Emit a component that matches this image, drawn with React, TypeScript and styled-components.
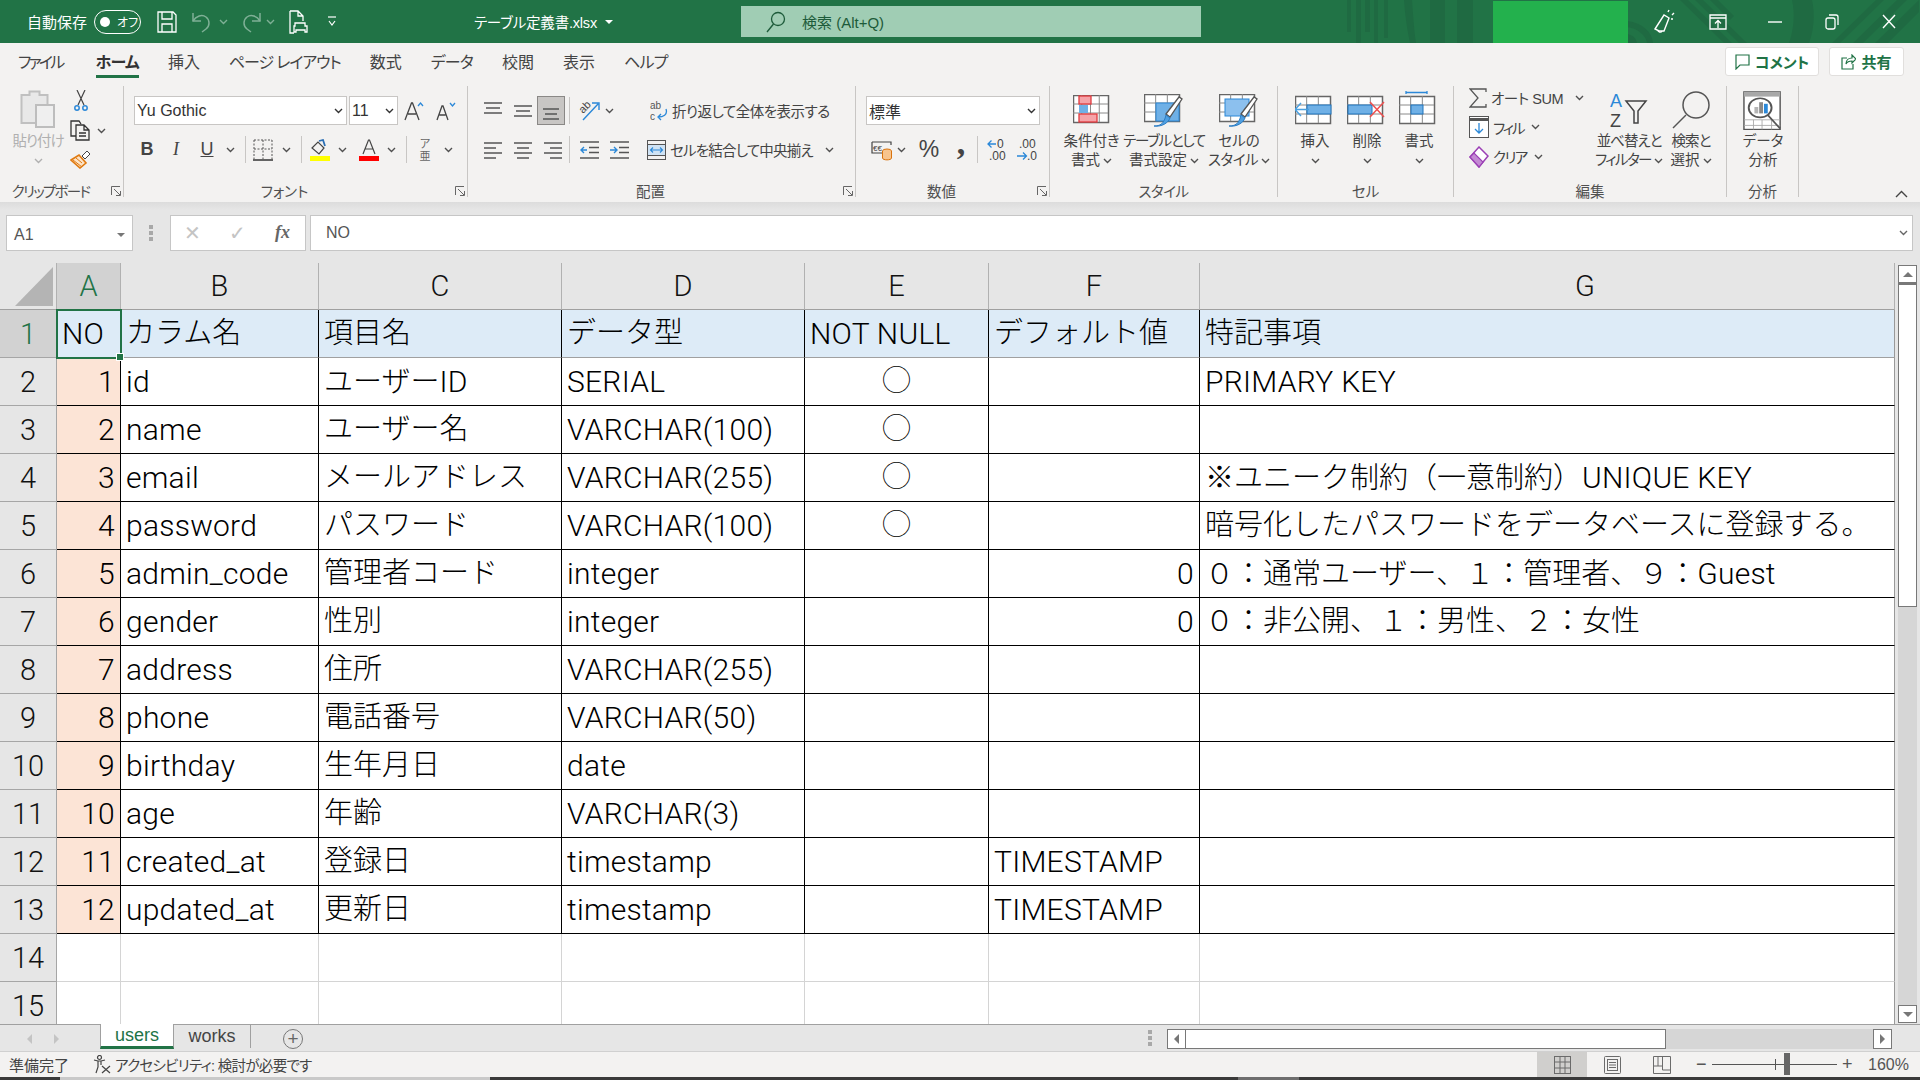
import React from 'react';
import styled, { createGlobalStyle } from 'styled-components';

const GREEN = '#217346';
const FONT = `"Liberation Sans", "Noto Sans CJK JP", sans-serif`;
const SHEET_FONT = `Roboto, "Noto Sans CJK JP", sans-serif`;

const GlobalStyle = createGlobalStyle`
  html, body { margin: 0; padding: 0; background: #fff; }
  body { font-family: ${FONT}; font-feature-settings: "palt"; overflow: hidden; }
  * { box-sizing: border-box; }
`;

/* ---------- data ---------- */
const COLUMNS = [
  { name: 'A', width: 64 },
  { name: 'B', width: 198 },
  { name: 'C', width: 243 },
  { name: 'D', width: 243 },
  { name: 'E', width: 184 },
  { name: 'F', width: 211 },
  { name: 'G', width: 695 },
];

const ROWS: (string | number)[][] = [
  ['NO', 'カラム名', '項目名', 'データ型', 'NOT NULL', 'デフォルト値', '特記事項'],
  [1, 'id', 'ユーザーID', 'SERIAL', '◯', '', 'PRIMARY KEY'],
  [2, 'name', 'ユーザー名', 'VARCHAR(100)', '◯', '', ''],
  [3, 'email', 'メールアドレス', 'VARCHAR(255)', '◯', '', '※ユニーク制約（一意制約）UNIQUE KEY'],
  [4, 'password', 'パスワード', 'VARCHAR(100)', '◯', '', '暗号化したパスワードをデータベースに登録する。'],
  [5, 'admin_code', '管理者コード', 'integer', '', 0, '０：通常ユーザー、１：管理者、９：Guest'],
  [6, 'gender', '性別', 'integer', '', 0, '０：非公開、１：男性、２：女性'],
  [7, 'address', '住所', 'VARCHAR(255)', '', '', ''],
  [8, 'phone', '電話番号', 'VARCHAR(50)', '', '', ''],
  [9, 'birthday', '生年月日', 'date', '', '', ''],
  [10, 'age', '年齢', 'VARCHAR(3)', '', '', ''],
  [11, 'created_at', '登録日', 'timestamp', '', 'TIMESTAMP', ''],
  [12, 'updated_at', '更新日', 'timestamp', '', 'TIMESTAMP', ''],
  ['', '', '', '', '', '', ''],
  ['', '', '', '', '', '', ''],
];

const TABS = [
  { text: 'ファイル', ls: -2.7, mr: 4 },
  { text: 'ホーム', ls: -0.8, mr: 0 },
  { text: '挿入', ls: 0, mr: 0 },
  { text: 'ページ レイアウト', ls: -1.1, mr: 0 },
  { text: '数式', ls: 0, mr: 0 },
  { text: 'データ', ls: -0.8, mr: 0 },
  { text: '校閲', ls: 0, mr: 0 },
  { text: '表示', ls: 0, mr: 0 },
  { text: 'ヘルプ', ls: -0.8, mr: 0 },
];

/* ---------- icons ---------- */
const Chev = ({ color = '#505050' }: { color?: string }) => (
  <svg width="9" height="6" viewBox="0 0 9 6">
    <polyline points="1,1 4.5,4.5 8,1" fill="none" stroke={color} strokeWidth="1.4" />
  </svg>
);

const Launcher = () => (
  <svg width="10" height="10" viewBox="0 0 10 10" fill="none" stroke="#666">
    <polyline points="0.5,9 0.5,0.5 9,0.5" />
    <polyline points="3,3 9,9" />
    <polyline points="5,9.5 9.5,9.5 9.5,5" />
  </svg>
);

const SaveIcon = () => (
  <svg width="20" height="22" viewBox="0 0 20 22" fill="none" stroke="#fff" strokeWidth="1.3">
    <path d="M1 1h15l3 3v17H1z" />
    <path d="M5 1v7h10V1M5 21v-8h10v8" />
  </svg>
);

const UndoIcon = ({ flip }: { flip?: boolean }) => (
  <svg width="20" height="22" viewBox="0 0 20 22" fill="none" stroke="#7fb096" strokeWidth="1.5" style={flip ? { transform: 'scaleX(-1)' } : undefined}>
    <path d="M1 2v8h8" />
    <path d="M1 10c3-5 9-7 13-4 4 3 4 9 0 12l-4 3" />
  </svg>
);

const PrintIcon = () => (
  <svg width="19" height="24" viewBox="0 0 19 24" fill="none" stroke="#fff" strokeWidth="1.3">
    <path d="M1 1h8l5 5v5M9 1v5h5M1 1v22h4" />
    <path d="M6 13h10v3h2v6h-2v-2H7v2H5v-6h1z" />
  </svg>
);

const CustomizeIcon = () => (
  <svg width="10" height="11" viewBox="0 0 10 11" fill="none" stroke="#fff">
    <path d="M1 1h8" strokeWidth="1.2" />
    <polyline points="2,5 5,9 8,5" strokeWidth="1.2" />
  </svg>
);

const SearchIcon = () => (
  <svg width="20" height="22" viewBox="0 0 20 22" fill="none" stroke="#1d5b3a" strokeWidth="1.3">
    <circle cx="12" cy="8" r="6.5" />
    <path d="M7.5 13 1 21" />
  </svg>
);

const MegaphoneIcon = () => (
  <svg width="22" height="26" viewBox="0 0 22 26" fill="none" stroke="#fff" strokeWidth="1.4">
    <path d="M2 20 11 6l5 3-5 13H6z" />
    <path d="M5 21c0 2 3 3 4 1" />
    <path d="M15 3l1-2M19 6l2-2M18 10h2" />
  </svg>
);

const RibbonModeIcon = () => (
  <svg width="18" height="16" viewBox="0 0 18 16" fill="none" stroke="#fff" strokeWidth="1.3">
    <path d="M1 1h16v14H1zM1 4h16" />
    <path d="M9 14V7M6 9.5 9 6.5l3 3" />
  </svg>
);

const MinIcon = () => (
  <svg width="14" height="2" viewBox="0 0 14 2">
    <path d="M0 1h14" stroke="#fff" strokeWidth="1.4" />
  </svg>
);

const RestoreIcon = () => (
  <svg width="14" height="16" viewBox="0 0 14 16" fill="none" stroke="#fff" strokeWidth="1.3">
    <rect x="1" y="4" width="9" height="11" rx="2" />
    <path d="M4 1h7c1.5 0 2 1 2 2v8" />
  </svg>
);

const CloseIcon = () => (
  <svg width="14" height="15" viewBox="0 0 14 15" stroke="#fff" strokeWidth="1.4">
    <path d="M1 1l12 13M13 1 1 14" />
  </svg>
);

const PasteIcon = () => (
  <svg width="36" height="38" viewBox="0 0 36 38">
    <path d="M1.5 5h8V1.5h10V5h8v28h-26z" fill="#e8e8e8" stroke="#c0c0c0" strokeWidth="2" />
    <rect x="16" y="15" width="18" height="22" fill="#efefef" stroke="#bdbdbd" strokeWidth="2" />
  </svg>
);

const CutIcon = () => (
  <svg width="14" height="21" viewBox="0 0 14 21" fill="none">
    <path d="M3 0l7 15M11 0 4 15" stroke="#444" strokeWidth="1.2" />
    <circle cx="3" cy="18" r="2.2" stroke="#2b88d8" strokeWidth="1.5" />
    <circle cx="11" cy="18" r="2.2" stroke="#2b88d8" strokeWidth="1.5" />
  </svg>
);

const CopyIcon = () => (
  <svg width="20" height="21" viewBox="0 0 20 21" fill="none" stroke="#333" strokeWidth="1.3">
    <path d="M6 16H1V1h8l2 3" />
    <path d="M6 5h8l5 5v10H6zM14 5v5h5M9 13h7M9 16h7" />
  </svg>
);

const PainterIcon = () => (
  <svg width="21" height="19" viewBox="0 0 21 19" fill="none">
    <path d="M1 10 9 5l7 8-6 5z" fill="#fde3c6" stroke="#e07a10" strokeWidth="1.6" />
    <path d="M3 10l9 7M6 8l6 5" stroke="#e07a10" />
    <path d="M12 6l5-5 3 3-5 5z" fill="#fff" stroke="#444" />
  </svg>
);

const GrowIcon = ({ up }: { up?: boolean }) => (
  <svg width="20" height="20" viewBox="0 0 20 20" fill="none">
    <path d={up ? 'M1 19 7.5 2h1L15 19M4 13h8' : 'M1 19 6 5h1l5 14M3.5 14h6'} stroke="#444" strokeWidth="1.3" />
    <polyline points={up ? '14,5 16.5,2 19,5' : '14,2 16.5,5 19,2'} stroke="#2b88d8" strokeWidth="1.3" />
  </svg>
);

const BorderIcon = () => (
  <svg width="20" height="22" viewBox="0 0 20 22" fill="none" stroke="#555">
    <path d="M1 1v19M19 1v19M1 1h18M10 1v19M1 10h18" strokeDasharray="2 1.5" />
    <path d="M0 21h20" strokeWidth="1.5" stroke="#333" />
  </svg>
);

const FillIcon = () => (
  <svg width="20" height="22" viewBox="0 0 20 22" fill="none">
    <path d="M2 9 8 3l6 6-5 6z" stroke="#444" strokeWidth="1.2" />
    <path d="M9 2l4-1 2 6" stroke="#2b6fb5" strokeWidth="1.8" />
    <rect x="0" y="17" width="20" height="5" fill="#ffff00" />
  </svg>
);

const FontColorIcon = () => (
  <svg width="20" height="22" viewBox="0 0 20 22" fill="none">
    <path d="M4 15 9.5 1h1L16 15M6 10h8" stroke="#444" strokeWidth="1.2" />
    <rect x="0" y="17" width="20" height="5" fill="#ff0000" />
  </svg>
);

const Lines = ({ rows, width = 18 }: { rows: [number, number, number][]; width?: number }) => (
  <svg width={width} height="20" viewBox={`0 0 ${width} 20`} stroke="#555" strokeWidth="1.5">
    {rows.map(([x1, x2, y], i) => (
      <path key={i} d={`M${x1} ${y}H${x2}`} />
    ))}
  </svg>
);

const OrientIcon = () => (
  <svg width="21" height="22" viewBox="0 0 21 22" fill="none">
    <text x="1" y="11" fontSize="11" fill="#444" transform="rotate(-45 6 9)" fontFamily="Liberation Sans">ab</text>
    <path d="M4 20 19 4M13 3h7v7" stroke="#2b88d8" strokeWidth="1.4" />
  </svg>
);

const IndentIcon = ({ rtl }: { rtl?: boolean }) => (
  <svg width="19" height="20" viewBox="0 0 19 20" fill="none">
    <path d="M0 2h19M9 7.5h10M9 12.5h10M0 18h19" stroke="#555" strokeWidth="1.4" />
    {rtl ? (
      <path d="M0 10h6M4 7l3 3-3 3" stroke="#2b88d8" strokeWidth="1.4" />
    ) : (
      <path d="M7 10H1M4 7l-3 3 3 3" stroke="#2b88d8" strokeWidth="1.4" />
    )}
  </svg>
);

const WrapIcon = () => (
  <svg width="18" height="22" viewBox="0 0 18 22" fill="none">
    <text x="0" y="9" fontSize="10" fill="#555" fontFamily="Liberation Sans">ab</text>
    <text x="0" y="20" fontSize="10" fill="#555" fontFamily="Liberation Sans">c</text>
    <path d="M16 9c2 6-3 8-8 8M11 14l-3 3 3 3" stroke="#2b88d8" strokeWidth="1.3" />
  </svg>
);

const MergeIcon = () => (
  <svg width="19" height="20" viewBox="0 0 19 20" fill="none">
    <rect x="0.5" y="0.5" width="18" height="19" stroke="#555" />
    <rect x="0.5" y="4.5" width="18" height="11" fill="#cfe3f5" stroke="#555" />
    <path d="M4 10h11M6 7.5 3.5 10 6 12.5M13 7.5l2.5 2.5L13 12.5" stroke="#2b88d8" strokeWidth="1.1" />
  </svg>
);

const AccountIcon = () => (
  <svg width="21" height="22" viewBox="0 0 21 22" fill="none">
    <path d="M1 3h19v3M1 3v11h10" stroke="#444" strokeWidth="1.2" />
    <text x="2" y="12" fontSize="8" fill="#444" fontFamily="Liberation Sans">€€</text>
    <ellipse cx="16" cy="12" rx="4.5" ry="2" fill="#f7c48d" stroke="#d9730d" />
    <path d="M11.5 12v7c0 2.5 9 2.5 9 0v-7" fill="#f7c48d" stroke="#d9730d" />
  </svg>
);

const DecimalIcon = ({ more }: { more?: boolean }) => (
  <svg width="20" height="24" viewBox="0 0 20 24" fill="none">
    <text x={more ? 2 : 10} y="10" fontSize="12" fill="#444" fontFamily="Liberation Sans">{more ? '.00' : '0'}</text>
    <text x={more ? 10 : 2} y="22" fontSize="12" fill="#444" fontFamily="Liberation Sans">{more ? '.0' : '.00'}</text>
    {more ? (
      <path d="M0 18h9M6 14.5 9.5 18 6 21.5" stroke="#2b88d8" strokeWidth="1.3" />
    ) : (
      <path d="M9 6H1M4.5 2.5 1 6l3.5 3.5" stroke="#2b88d8" strokeWidth="1.3" />
    )}
  </svg>
);

const SheetGlyph = ({ x = 0, y = 0, w = 35, h = 27, cols = 4, rows = 3 }) => (
  <g fill="none">
    <rect x={x + 0.5} y={y + 0.5} width={w} height={h} stroke="#666" strokeWidth="1.5" fill="#fff" />
    {Array.from({ length: cols - 1 }, (_, i) => (
      <path key={i} d={`M${x + ((i + 1) * w) / cols} ${y}v${h}`} stroke="#8a8a8a" />
    ))}
    {Array.from({ length: rows - 1 }, (_, i) => (
      <path key={`r${i}`} d={`M${x} ${y + ((i + 1) * h) / rows}h${w}`} stroke="#8a8a8a" />
    ))}
  </g>
);

const CondIcon = () => (
  <svg width="37" height="32" viewBox="0 0 37 32">
    <SheetGlyph />
    <rect x="6" y="1" width="12" height="8" fill="#f5a3a8" stroke="#e03a3e" strokeWidth="1.3" />
    <rect x="6" y="10" width="9" height="8" fill="#6fb0e6" />
    <rect x="6" y="19" width="18" height="8" fill="#f5a3a8" stroke="#e03a3e" strokeWidth="1.3" />
  </svg>
);

const Brush = () => (
  <g>
    <path d="M22 20 35 3l3 2-12 18z" fill="#fff" stroke="#555" strokeWidth="1.3" />
    <path d="M10 32c6 0 10-2 12-11l4 3c-2 5-8 9-16 8z" fill="#4f9fe0" stroke="#2b7cc4" />
  </g>
);

const TableStyleIcon = () => (
  <svg width="40" height="33" viewBox="0 0 40 33">
    <SheetGlyph cols={3} />
    <rect x="12" y="9" width="23" height="18" fill="#6fb0e6" stroke="#2b88d8" />
    <Brush />
  </svg>
);

const CellStyleIcon = () => (
  <svg width="40" height="33" viewBox="0 0 40 33">
    <SheetGlyph cols={3} />
    <rect x="6" y="5" width="24" height="17" fill="#8cc0ee" stroke="#2b88d8" />
    <Brush />
  </svg>
);

const CellOpIcon = ({ kind }: { kind: 'insert' | 'delete' | 'format' }) => (
  <svg width="40" height="40" viewBox="0 0 40 40">
    {kind === 'format' && <path d="M7 1.5h21M7 0v3M28 0v3" stroke="#2b88d8" strokeWidth="1.3" />}
    <SheetGlyph y={5} cols={3} />
    {kind === 'insert' && (
      <g>
        <rect x="12" y="14" width="24" height="9" fill="#6fb0e6" stroke="#1f74bd" />
        <path d="M0 18.5h14M6 12l-6 6.5L6 25" fill="none" stroke="#4aa0e0" strokeWidth="1.5" />
      </g>
    )}
    {kind === 'delete' && (
      <g>
        <rect x="1" y="14" width="24" height="9" fill="#6fb0e6" stroke="#1f74bd" />
        <path d="M23 11l14 15M37 11 23 26" stroke="#f0504f" strokeWidth="1.5" />
      </g>
    )}
    {kind === 'format' && <rect x="12" y="14" width="12" height="9" fill="#6fb0e6" stroke="#1f74bd" />}
  </svg>
);

const SigmaIcon = () => (
  <svg width="18" height="20" viewBox="0 0 18 20" fill="none">
    <path d="M17 4V1H1l8 9-8 9h16v-3" stroke="#555" strokeWidth="1.3" />
  </svg>
);

const FillDownIcon = () => (
  <svg width="20" height="22" viewBox="0 0 20 22" fill="none">
    <rect x="0.5" y="0.5" width="19" height="21" fill="#fff" stroke="#555" />
    <path d="M0 3.5h20" stroke="#555" strokeWidth="3" />
    <path d="M10 7v10M6 13l4 4 4-4" stroke="#2b88d8" strokeWidth="1.3" />
  </svg>
);

const ClearIcon = () => (
  <svg width="20" height="22" viewBox="0 0 20 22" fill="none">
    <path d="M10 1l9 9-9 11-9-10z" fill="#fff" stroke="#9b3fb5" strokeWidth="1.5" />
    <path d="M1 11l4-4 9 9-4 5z" fill="#c38ad3" stroke="#9b3fb5" strokeWidth="1.2" />
  </svg>
);

const SortIcon = () => (
  <svg width="38" height="40" viewBox="0 0 38 40" fill="none">
    <text x="0" y="16" fontSize="18" fill="#2b88d8" fontFamily="Liberation Sans">A</text>
    <text x="0" y="36" fontSize="18" fill="#444" fontFamily="Liberation Sans">Z</text>
    <path d="M16 10h20l-8 10v12h-4V20z" stroke="#444" strokeWidth="1.5" />
  </svg>
);

const FindIcon = () => (
  <svg width="38" height="40" viewBox="0 0 38 40" fill="none" stroke="#555" strokeWidth="1.5">
    <ellipse cx="24" cy="14" rx="13" ry="13" />
    <path d="M14 24 1 37" />
  </svg>
);

const AnalyzeIcon = () => (
  <svg width="40" height="40" viewBox="0 0 42 50" preserveAspectRatio="none" fill="none">
    <rect x="1" y="1" width="38" height="47" fill="#fff" stroke="#555" strokeWidth="1.5" />
    <rect x="1" y="1" width="38" height="6" fill="#a8a8a8" />
    <path d="M1 36h38M1 43h38M11 36v12M20 36v12M30 36v12" stroke="#a8a8a8" />
    <circle cx="18" cy="21" r="12" fill="#fff" stroke="#555" strokeWidth="2" />
    <rect x="12" y="20" width="4" height="8" fill="#b5b5b5" />
    <rect x="17" y="14" width="4" height="14" fill="#888" />
    <rect x="22" y="16" width="4" height="12" fill="#2b88d8" />
    <path d="M26 30l13 17" stroke="#555" strokeWidth="2" />
  </svg>
);

const CommentIcon = () => (
  <svg width="15" height="16" viewBox="0 0 15 16" fill="none" stroke={GREEN} strokeWidth="1.2">
    <path d="M1 1h13v10H5l-4 4z" />
  </svg>
);

const ShareIcon = () => (
  <svg width="15" height="16" viewBox="0 0 15 16" fill="none" stroke={GREEN} strokeWidth="1.2">
    <path d="M6 4H1v11h11v-5M5 10c0-4 3-6 6-6V1l4 4-4 4V7c-3 0-5 1-6 3z" />
  </svg>
);

const AccessIcon = () => (
  <svg width="18" height="19" viewBox="0 0 18 19" fill="none" stroke="#444" strokeWidth="1.2">
    <circle cx="6.5" cy="2.5" r="2" />
    <path d="M1 5l4 1h3l4-1M5 6v6l-2 6M8 6v4" />
    <path d="M9 11l8 7M17 11l-8 7" />
  </svg>
);

const ViewNormal = () => (
  <svg width="17" height="18" viewBox="0 0 17 18" stroke="#6b6b6b" fill="none">
    <rect x="0.5" y="0.5" width="16" height="17" />
    <path d="M6 0v18M11 0v18M0 6h17M0 12h17" />
  </svg>
);

const ViewPage = () => (
  <svg width="17" height="18" viewBox="0 0 17 18" stroke="#6b6b6b" fill="none">
    <rect x="0.5" y="0.5" width="16" height="17" rx="1" />
    <rect x="3.5" y="3.5" width="10" height="11" />
    <path d="M5 6.5h7M5 9h7M5 11.5h7" />
  </svg>
);

const ViewBreak = () => (
  <svg width="18" height="18" viewBox="0 0 18 18" stroke="#6b6b6b" fill="none">
    <path d="M0.5 0.5h17v17H0.5zM0.5 10h9V0.5M9.5 10V14h8M5 1v9" />
  </svg>
);

const FxGlyph = () => (
  <svg width="18" height="20" viewBox="0 0 18 20" fill="none">
    <text x="1" y="15" fontSize="18" fontStyle="italic" fontWeight="700" fontFamily="Liberation Serif" fill="#666">fx</text>
  </svg>
);

const TitleDecor = () => (
  <DecorSvg width="720" height="43" viewBox="1200 0 720 43">
    <g fill="#1f6a42">
      <rect x="1347" y="0" width="4" height="32" />
      <rect x="1356" y="0" width="5" height="43" />
      <rect x="1365" y="0" width="5" height="32" />
      <rect x="1374" y="0" width="4" height="43" />
      <rect x="1384" y="0" width="4" height="38" />
      <path d="M1404 0h8c1 14 2 30 4 43h-6c-3-14-5-28-6-43z" />
      <rect x="1430" y="0" width="15" height="43" />
      <rect x="1457" y="0" width="16" height="43" />
      <path d="M1627 21c16 2 25 11 26 22h-6c-1-8-10-15-20-16zM1627 34c6 1 9 4 10 9h-10z" />
      <path d="M1680 0l44 43h8l-44-43zM1695 0l44 43h8l-44-43zM1710 0l20 20 4-4-16-16z" />
      <path d="M1792 0h20c3 14 2 30-3 43h-20c5-14 6-30 3-43z" />
      <path d="M1853 43l44-43h10l-44 43zM1875 43l44-43v12l-31 31zM1832 43l44-43h8l-44 43z" />
    </g>
  </DecorSvg>
);

// Yu Gothic's latin runs a bit larger than the kana next to it
const cellText = (v: string | number) =>
  String(v)
    .split(/([\x20-\x7e]+)/)
    .map((part, i) => (i % 2 ? <LatinRun key={i}>{part}</LatinRun> : part));

/* ---------- app ---------- */
const App: React.FC = () => {
  return (
    <Page>
      <GlobalStyle />

      <TitleBar>
        <TitleDecor />
        <AutoSave>自動保存</AutoSave>
        <Toggle>
          <ToggleKnob />
          <span>オフ</span>
        </Toggle>
        <Slot $w={20} $ml={16}><SaveIcon /></Slot>
        <Slot $w={20} $ml={15}><UndoIcon /></Slot>
        <Slot $w={10} $ml={6}><Chev color="#7fb096" /></Slot>
        <Slot $w={20} $ml={13}><UndoIcon flip /></Slot>
        <Slot $w={10} $ml={4}><Chev color="#7fb096" /></Slot>
        <Slot $w={19} $ml={14}><PrintIcon /></Slot>
        <Slot $w={10} $ml={19}><CustomizeIcon /></Slot>
        <FileName>テーブル定義書.xlsx</FileName>
        <FileCaret />
        <SearchBox>
          <SearchIcon />
          <span>検索 (Alt+Q)</span>
        </SearchBox>
        <UserBlock />
        <Slot $w={22} $ml={25}><MegaphoneIcon /></Slot>
        <Slot $w={18} $ml={34}><RibbonModeIcon /></Slot>
        <Slot $w={14} $ml={41}><MinIcon /></Slot>
        <Slot $w={14} $ml={43}><RestoreIcon /></Slot>
        <Slot $w={14} $ml={43}><CloseIcon /></Slot>
      </TitleBar>

      <TabRow>
        {TABS.map(t => (
          <Tab key={t.text} $active={t.text === 'ホーム'} $ls={t.ls} $mr={t.mr}>{t.text}</Tab>
        ))}
        <TabActions>
          <PillButton $w={94}><CommentIcon />コメント</PillButton>
          <PillButton $w={75}><ShareIcon />共有</PillButton>
        </TabActions>
      </TabRow>

      <Ribbon>
        <Group $w={124}>
          <GroupBody $pl={10}>
            <PasteCol>
              <PasteIcon />
              <BigText $muted $ls={-1}>貼り付け</BigText>
              <ChevLine><Chev color="#b0b0b0" /></ChevLine>
            </PasteCol>
            <ClipCol>
              <CutIcon />
              <CopyRow><CopyIcon /><Chev /></CopyRow>
              <PainterIcon />
            </ClipCol>
          </GroupBody>
          <GroupLabel $launcher $ls={-1.7}>クリップボード<LauncherSpot><Launcher /></LauncherSpot></GroupLabel>
        </Group>

        <Group $w={344}>
          <ToolRows $pl={10}>
            <ToolRow>
              <SelectBox $w={213}>Yu Gothic<Chev color="#333" /></SelectBox>
              <SelectBox $w={49} $ml={2}>11<Chev color="#333" /></SelectBox>
              <Tool $w={22} $ml={5}><GrowIcon up /></Tool>
              <Tool $w={22} $ml={10}><GrowIcon /></Tool>
            </ToolRow>
            <ToolRow>
              <Tool $w={22} $ml={2}><BoldGlyph>B</BoldGlyph></Tool>
              <Tool $w={22} $ml={7}><ItalicGlyph>I</ItalicGlyph></Tool>
              <Tool $w={22} $ml={9}><UnderGlyph>U</UnderGlyph></Tool>
              <Tool $w={12} $ml={6}><Chev /></Tool>
              <VSep $ml={9} />
              <Tool $w={22} $ml={6}><BorderIcon /></Tool>
              <Tool $w={12} $ml={6}><Chev /></Tool>
              <VSep $ml={9} />
              <Tool $w={22} $ml={7}><FillIcon /></Tool>
              <Tool $w={12} $ml={5}><Chev /></Tool>
              <Tool $w={22} $ml={10}><FontColorIcon /></Tool>
              <Tool $w={12} $ml={5}><Chev /></Tool>
              <VSep $ml={9} />
              <Tool $w={14} $ml={11}><Furigana>ア<br />亜</Furigana></Tool>
              <Tool $w={12} $ml={10}><Chev /></Tool>
            </ToolRow>
          </ToolRows>
          <GroupLabel $launcher>フォント<LauncherSpot><Launcher /></LauncherSpot></GroupLabel>
        </Group>

        <Group $w={388}>
          <ToolRows $pl={13}>
            <ToolRow>
              <Tool $w={24} $ml={0}><Lines rows={[[0, 18, 2], [2, 16, 7], [0, 18, 12]]} /></Tool>
              <Tool $w={24} $ml={6}><Lines rows={[[0, 18, 5], [2, 16, 10], [0, 18, 15]]} /></Tool>
              <ActiveTool><Lines rows={[[1, 17, 8], [3, 15, 13], [1, 17, 18]]} /></ActiveTool>
              <VSep $ml={4} />
              <Tool $w={22} $ml={8}><OrientIcon /></Tool>
              <Tool $w={12} $ml={3}><Chev /></Tool>
              <Tool $w={20} $ml={34}><WrapIcon /></Tool>
              <ToolText $ml={3} $ls={-0.5}>折り返して全体を表示する</ToolText>
            </ToolRow>
            <ToolRow>
              <Tool $w={24} $ml={0}><Lines rows={[[0, 18, 3], [0, 12, 8], [0, 18, 13], [0, 12, 18]]} /></Tool>
              <Tool $w={24} $ml={6}><Lines rows={[[0, 18, 3], [3, 15, 8], [0, 18, 13], [3, 15, 18]]} /></Tool>
              <Tool $w={24} $ml={6}><Lines rows={[[0, 18, 3], [6, 18, 8], [0, 18, 13], [6, 18, 18]]} /></Tool>
              <VSep $ml={4} />
              <Tool $w={22} $ml={8}><IndentIcon /></Tool>
              <Tool $w={22} $ml={8}><IndentIcon rtl /></Tool>
              <Tool $w={20} $ml={16}><MergeIcon /></Tool>
              <ToolText $ml={4} $ls={-0.8}>セルを結合して中央揃え</ToolText>
              <Tool $w={12} $ml={11}><Chev /></Tool>
            </ToolRow>
          </ToolRows>
          <GroupLabel $launcher>配置<LauncherSpot><Launcher /></LauncherSpot></GroupLabel>
        </Group>

        <Group $w={194}>
          <ToolRows $pl={10}>
            <ToolRow>
              <SelectBox $w={174}>標準<Chev color="#333" /></SelectBox>
            </ToolRow>
            <ToolRow>
              <Tool $w={22} $ml={4}><AccountIcon /></Tool>
              <Tool $w={12} $ml={3}><Chev /></Tool>
              <Tool $w={22} $ml={11}><Percent>%</Percent></Tool>
              <Tool $w={14} $ml={14}><Comma>,</Comma></Tool>
              <VSep $ml={9} />
              <Tool $w={22} $ml={8}><DecimalIcon /></Tool>
              <Tool $w={22} $ml={8}><DecimalIcon more /></Tool>
            </ToolRow>
          </ToolRows>
          <GroupLabel $launcher>数値<LauncherSpot><Launcher /></LauncherSpot></GroupLabel>
        </Group>

        <Group $w={228}>
          <GroupBody $pl={7}>
            <BigButton $w={69}>
              <BigIcon><CondIcon /></BigIcon>
              <BigText>条件付き</BigText>
              <BigText>書式 <Chev /></BigText>
            </BigButton>
            <BigButton $w={76}>
              <BigIcon><TableStyleIcon /></BigIcon>
              <BigText $ls={-1.3}>テーブルとして</BigText>
              <BigText>書式設定 <Chev /></BigText>
            </BigButton>
            <BigButton $w={74}>
              <BigIcon><CellStyleIcon /></BigIcon>
              <BigText>セルの</BigText>
              <BigText $ls={-0.5}>スタイル <Chev /></BigText>
            </BigButton>
          </GroupBody>
          <GroupLabel $ls={-0.5}>スタイル</GroupLabel>
        </Group>

        <Group $w={176}>
          <GroupBody $pl={11}>
            <BigButton $w={52}>
              <BigIcon><CellOpIcon kind="insert" /></BigIcon>
              <BigText>挿入</BigText>
              <ChevLine><Chev /></ChevLine>
            </BigButton>
            <BigButton $w={52}>
              <BigIcon><CellOpIcon kind="delete" /></BigIcon>
              <BigText>削除</BigText>
              <ChevLine><Chev /></ChevLine>
            </BigButton>
            <BigButton $w={52}>
              <BigIcon><CellOpIcon kind="format" /></BigIcon>
              <BigText>書式</BigText>
              <ChevLine><Chev /></ChevLine>
            </BigButton>
          </GroupBody>
          <GroupLabel>セル</GroupLabel>
        </Group>

        <Group $w={273}>
          <GroupBody $pl={15}>
            <EditCol>
              <EditRow><SigmaIcon /><EditLabel $ls={-0.4}>オート SUM</EditLabel><Tool $w={12} $ml={6}><Chev /></Tool></EditRow>
              <EditRow><FillDownIcon /><EditLabel $ls={-2}>フィル</EditLabel><Tool $w={12} $ml={2}><Chev /></Tool></EditRow>
              <EditRow><ClearIcon /><EditLabel $ls={-1.6}>クリア</EditLabel><Tool $w={12} $ml={2}><Chev /></Tool></EditRow>
            </EditCol>
            <BigButton $w={72}>
              <BigIcon><SortIcon /></BigIcon>
              <BigText $ls={-1}>並べ替えと</BigText>
              <BigText $ls={-1.5}>フィルター <Chev /></BigText>
            </BigButton>
            <BigButton $w={52}>
              <BigIcon><FindIcon /></BigIcon>
              <BigText $ls={-1}>検索と</BigText>
              <BigText>選択 <Chev /></BigText>
            </BigButton>
          </GroupBody>
          <GroupLabel>編集</GroupLabel>
        </Group>

        <Group $w={72}>
          <GroupBody $pl={0}>
            <BigButton $w={72}>
              <BigIcon><AnalyzeIcon /></BigIcon>
              <BigText>データ</BigText>
              <BigText>分析</BigText>
            </BigButton>
          </GroupBody>
          <GroupLabel>分析</GroupLabel>
        </Group>
        <Collapse>
          <svg width="13" height="8" viewBox="0 0 13 8" fill="none" stroke="#444" strokeWidth="1.4">
            <polyline points="1,7 6.5,1.5 12,7" />
          </svg>
        </Collapse>
      </Ribbon>

      <FormulaBar>
        <NameBox>
          A1
          <DownTriangle />
        </NameBox>
        <GripDots $mt={10} />
        <FxBox>
          <FxMark>✕</FxMark>
          <FxMark>✓</FxMark>
          <FxGlyph />
        </FxBox>
        <FormulaInput>
          NO
          <Chev color="#666" />
        </FormulaInput>
      </FormulaBar>

      <SheetArea>
        <GridClip>
          <SheetLayout>
            <Corner><CornerMark /></Corner>
            {COLUMNS.map(c => (
              <ColHead key={c.name} $active={c.name === 'A'} $last={c.name === 'G'}>{c.name}</ColHead>
            ))}
            {ROWS.map((row, r) => (
              <React.Fragment key={r}>
                <RowHead $active={r === 0}>{r + 1}</RowHead>
                {row.map((v, c) => (
                  <Cell
                    key={c}
                    $header={r === 0}
                    $plain={r > 12}
                    $num={r > 0 && r <= 12 && c === 0}
                    $last={c === 6}
                    $align={typeof v === 'number' ? 'right' : v === '◯' ? 'center' : 'left'}
                    $selected={r === 0 && c === 0}
                  >
                    {cellText(v)}
                  </Cell>
                ))}
              </React.Fragment>
            ))}
          </SheetLayout>
        </GridClip>
        <VScroll>
          <ScrollBtn $dir="up" />
          <VThumb />
          <VTrack />
          <ScrollBtn $dir="down" />
        </VScroll>
      </SheetArea>

      <SheetBar>
        <TabNav>
          <NavArrow $dir="left" />
          <NavArrow $dir="right" />
        </TabNav>
        <SheetTab $active>users</SheetTab>
        <SheetTab>works</SheetTab>
        <AddSheet>+</AddSheet>
        <GripDots $mt={5} />
        <HScroll>
          <HBtn $dir="left" />
          <HThumb />
          <HTrack />
          <HBtn $dir="right" />
        </HScroll>
      </SheetBar>

      <StatusBar>
        <StatusText>準備完了</StatusText>
        <StatusAccess><AccessIcon />アクセシビリティ: 検討が必要です</StatusAccess>
        <ViewBtn $active $ml="auto"><ViewNormal /></ViewBtn>
        <ViewBtn><ViewPage /></ViewBtn>
        <ViewBtn><ViewBreak /></ViewBtn>
        <ZoomMark $ml={9}>−</ZoomMark>
        <ZoomSlider><ZoomTick /><ZoomThumb /></ZoomSlider>
        <ZoomMark $ml={5}>+</ZoomMark>
        <ZoomValue>160%</ZoomValue>
      </StatusBar>

      <TaskStrip>
        <StripPart $w={60} $c="#3a3a3a" />
        <StripPart $w={430} $c="#c9c9c9" />
        <StripPart $w={748} $c="#3a3a3a" />
        <StripPart $w={61} $c="#6e6e6e" />
        <StripPart $w={621} $c="#3a3a3a" />
      </TaskStrip>
    </Page>
  );
};

const Page = styled.div`
  width: 1920px;
  height: 1080px;
  display: flex;
  flex-direction: column;
  overflow: hidden;
  color: #444;
`;

/* title bar */
const TitleBar = styled.div`
  height: 43px;
  flex: none;
  background: ${GREEN};
  color: #fff;
  display: flex;
  align-items: center;
  padding-left: 27px;
  position: relative;
  isolation: isolate;
  font-size: 15px;
`;

const DecorSvg = styled.svg`
  position: absolute;
  top: 0;
  right: 0;
  z-index: -1;
`;

const AutoSave = styled.span`
  width: 59px;
  white-space: nowrap;
`;

const Toggle = styled.div`
  width: 47px;
  height: 24px;
  margin-left: 8px;
  border: 1px solid #fff;
  border-radius: 12px;
  display: flex;
  align-items: center;
  padding-left: 5px;
  font-size: 12px;
  gap: 7px;
`;

const ToggleKnob = styled.span`
  width: 10px;
  height: 10px;
  border-radius: 50%;
  background: #fff;
`;

const Slot = styled.div<{ $w: number; $ml: number }>`
  width: ${p => p.$w}px;
  margin-left: ${p => p.$ml}px;
  flex: none;
  display: flex;
  justify-content: center;
  align-items: center;
`;

const FileName = styled.span`
  margin-left: 137px;
  width: 126px;
  flex: none;
  white-space: nowrap;
  font-size: 14.5px;
  letter-spacing: -0.2px;
`;

const FileCaret = styled.span`
  margin-left: 5px;
  width: 0;
  height: 0;
  border-left: 4px solid transparent;
  border-right: 4px solid transparent;
  border-top: 4px solid #fff;
`;

const SearchBox = styled.div`
  margin-left: 128px;
  width: 460px;
  height: 31px;
  flex: none;
  background: #a0cdb4;
  color: #1d5b3a;
  display: flex;
  align-items: center;
  gap: 16px;
  padding-left: 25px;
  font-size: 15px;
`;

const UserBlock = styled.div`
  margin-left: 292px;
  width: 135px;
  height: 42px;
  flex: none;
  align-self: flex-end;
  background: #23b14d;
`;

/* tabs */
const TabRow = styled.div`
  height: 37px;
  flex: none;
  background: #f3f2f1;
  display: flex;
  align-items: center;
  padding: 0 16px 0 18px;
  gap: 29px;
`;

const Tab = styled.div<{ $active?: boolean; $ls: number; $mr: number }>`
  height: 37px;
  display: flex;
  align-items: center;
  margin-right: ${p => p.$mr}px;
  font-size: 16px;
  letter-spacing: ${p => p.$ls}px;
  white-space: nowrap;
  color: ${p => (p.$active ? '#333' : '#444')};
  font-weight: ${p => (p.$active ? 700 : 400)};
  position: relative;
  padding-bottom: 2px;
  ${p =>
    p.$active &&
    `&::after {
      content: '';
      position: absolute;
      left: 0;
      right: 0;
      bottom: 2px;
      height: 3px;
      background: ${GREEN};
    }`}
`;

const TabActions = styled.div`
  margin-left: auto;
  display: flex;
  gap: 10px;
`;

const PillButton = styled.div<{ $w: number }>`
  width: ${p => p.$w}px;
  height: 29px;
  background: #fff;
  border: 1px solid #e1dfdd;
  border-radius: 3px;
  color: ${GREEN};
  font-size: 15px;
  font-weight: 700;
  display: flex;
  align-items: center;
  justify-content: center;
  gap: 5px;
`;

/* ribbon */
const Ribbon = styled.div`
  height: 122px;
  flex: none;
  background: #f3f2f1;
  display: flex;
  align-items: flex-start;
  padding-top: 6px;
`;

const Group = styled.div<{ $w: number }>`
  width: ${p => p.$w}px;
  height: 111px;
  flex: none;
  display: flex;
  flex-direction: column;
  border-right: 1px solid #c8c6c4;
`;

const GroupBody = styled.div<{ $pl: number }>`
  flex: 1;
  min-height: 0;
  display: flex;
  padding-left: ${p => p.$pl}px;
`;

const ToolRows = styled.div<{ $pl: number }>`
  flex: 1;
  min-height: 0;
  display: flex;
  flex-direction: column;
  gap: 10px;
  padding: 10px 0 0 ${p => p.$pl}px;
`;

const ToolRow = styled.div`
  height: 29px;
  display: flex;
  align-items: center;
`;

const Tool = styled.div<{ $w: number; $ml: number }>`
  width: ${p => p.$w}px;
  margin-left: ${p => p.$ml}px;
  height: 29px;
  flex: none;
  display: flex;
  align-items: center;
  justify-content: center;
`;

const ActiveTool = styled.div`
  width: 28px;
  height: 29px;
  margin-left: 2px;
  flex: none;
  background: #c8c6c4;
  border: 1px solid #8a8886;
  display: flex;
  align-items: center;
  justify-content: center;
`;

const VSep = styled.div<{ $ml: number }>`
  width: 1px;
  height: 27px;
  flex: none;
  margin-left: ${p => p.$ml}px;
  background: #c8c6c4;
`;

const SelectBox = styled.div<{ $w: number; $ml?: number }>`
  width: ${p => p.$w}px;
  margin-left: ${p => p.$ml ?? 0}px;
  height: 29px;
  flex: none;
  background: #fff;
  border: 1px solid #c8c6c4;
  color: #333;
  font-size: 16px;
  display: flex;
  align-items: center;
  justify-content: space-between;
  padding: 0 3px 0 2px;
`;

const ToolText = styled.span<{ $ml: number; $ls: number }>`
  margin-left: ${p => p.$ml}px;
  font-size: 14.5px;
  letter-spacing: ${p => p.$ls}px;
  white-space: nowrap;
`;

const GlyphBase = styled.span`
  font-family: "Liberation Sans", sans-serif;
  font-size: 18px;
  color: #444;
`;

const BoldGlyph = styled(GlyphBase)`
  font-weight: 700;
`;

const ItalicGlyph = styled(GlyphBase)`
  font-family: "Liberation Serif", serif;
  font-style: italic;
`;

const UnderGlyph = styled(GlyphBase)`
  text-decoration: underline;
`;

const Furigana = styled.span`
  font-size: 11px;
  line-height: 12px;
  text-align: center;
  color: #666;
`;

const Percent = styled.span`
  font-size: 23px;
  color: #444;
`;

const Comma = styled.span`
  font-size: 34px;
  line-height: 20px;
  font-weight: 700;
  font-family: "Liberation Serif", serif;
  color: #444;
  margin-top: -14px;
`;

const LauncherSpot = styled.span`
  position: absolute;
  right: 2px;
  top: 7px;
  display: flex;
`;

const GroupLabel = styled.div<{ $launcher?: boolean; $ls?: number }>`
  height: 22px;
  flex: none;
  margin-bottom: -5px;
  padding-right: ${p => (p.$launcher ? 22 : 0)}px;
  font-size: 14.5px;
  letter-spacing: ${p => p.$ls ?? 0}px;
  color: #505050;
  display: flex;
  align-items: center;
  justify-content: center;
  position: relative;
  white-space: nowrap;
  transform: translateY(-1px);
`;

const BigButton = styled.div<{ $w: number }>`
  width: ${p => p.$w}px;
  flex: none;
  display: flex;
  flex-direction: column;
  align-items: center;
  padding-top: 3px;
`;

const BigIcon = styled.div`
  height: 43px;
  display: flex;
  align-items: center;
  justify-content: center;
`;

const BigText = styled.div<{ $muted?: boolean; $ls?: number }>`
  height: 19px;
  line-height: 19px;
  font-size: 14.5px;
  letter-spacing: ${p => p.$ls ?? 0}px;
  white-space: nowrap;
  color: ${p => (p.$muted ? '#b0b0b0' : '#444')};
  display: flex;
  align-items: center;
  gap: 3px;
`;

const ChevLine = styled.div`
  height: 19px;
  display: flex;
  align-items: center;
  justify-content: center;
`;

const PasteCol = styled.div`
  width: 56px;
  flex: none;
  display: flex;
  flex-direction: column;
  align-items: center;
  padding-top: 4px;
  & > svg {
    height: 38px;
    margin-bottom: 4px;
  }
`;

const ClipCol = styled.div`
  margin-left: 4px;
  display: flex;
  flex-direction: column;
  align-items: flex-start;
  padding-top: 4px;
  gap: 9px;
  & > svg:first-child {
    margin-left: 4px;
  }
`;

const CopyRow = styled.div`
  display: flex;
  align-items: center;
  gap: 7px;
`;

const EditCol = styled.div`
  width: 124px;
  flex: none;
  margin-top: -3px;
`;

const EditRow = styled.div`
  height: 29.5px;
  display: flex;
  align-items: center;
  gap: 4px;
`;

const EditLabel = styled.span<{ $ls: number }>`
  font-size: 14.5px;
  letter-spacing: ${p => p.$ls}px;
  white-space: nowrap;
`;

const Collapse = styled.div`
  margin-left: 96px;
  margin-top: 104px;
  display: flex;
`;

/* formula bar */
const FormulaBar = styled.div`
  height: 61px;
  flex: none;
  background: linear-gradient(#dcdcdc, #e6e6e6 8px);
  display: flex;
  align-items: flex-start;
  padding: 13px 7px 0 6px;
`;

const NameBox = styled.div`
  width: 127px;
  height: 36px;
  flex: none;
  background: #fff;
  border: 1px solid #c6c6c6;
  display: flex;
  align-items: center;
  justify-content: space-between;
  padding: 3px 7px 0 7px;
  font-size: 16px;
  color: #555;
`;

const DownTriangle = styled.span`
  width: 0;
  height: 0;
  border-left: 4px solid transparent;
  border-right: 4px solid transparent;
  border-top: 4px solid #777;
`;

const GripDots = styled.div<{ $mt: number }>`
  width: 4px;
  height: 16px;
  flex: none;
  margin: ${p => p.$mt}px 17px 0 16px;
  background: repeating-linear-gradient(#a8a8a8 0 4px, transparent 4px 6px);
`;

const FxBox = styled.div`
  width: 136px;
  height: 36px;
  flex: none;
  background: #fff;
  border: 1px solid #c6c6c6;
  display: flex;
  align-items: center;
  justify-content: space-between;
  padding: 0 13px;
`;

const FxMark = styled.span`
  font-size: 20px;
  color: #c4c4c4;
  font-family: "DejaVu Sans", sans-serif;
`;

const FormulaInput = styled.div`
  flex: 1;
  height: 36px;
  margin-left: 4px;
  background: #fff;
  border: 1px solid #c6c6c6;
  display: flex;
  align-items: center;
  justify-content: space-between;
  padding: 0 4px 0 15px;
  font-size: 16px;
  color: #555;
`;

/* sheet */
const SheetArea = styled.div`
  height: 761px;
  flex: none;
  display: flex;
  background: #e6e6e6;
`;

const GridClip = styled.div`
  width: 1895px;
  height: 761px;
  flex: none;
  overflow: hidden;
`;

const SheetLayout = styled.div`
  display: grid;
  grid-template-columns: 57px ${COLUMNS.map(c => `${c.width}px`).join(' ')};
  grid-template-rows: 47px;
  grid-auto-rows: 48px;
  background: #fff;
  font-family: ${SHEET_FONT};
  font-weight: 300;
  font-feature-settings: normal;
`;

const Corner = styled.div`
  background: #e6e6e6;
  border-right: 1px solid #b1b1b1;
  border-bottom: 1px solid #a0a0a0;
  position: relative;
`;

const CornerMark = styled.div`
  position: absolute;
  left: 15px;
  top: 4px;
  width: 38px;
  height: 39px;
  background: #b4b4b4;
  clip-path: polygon(100% 0, 100% 100%, 0 100%);
`;

const ColHead = styled.div<{ $active?: boolean; $last?: boolean }>`
  background: ${p => (p.$active ? '#d2d2d2' : '#e6e6e6')};
  color: ${p => (p.$active ? GREEN : '#111')};
  border-right: 1px solid #b1b1b1;
  border-bottom: 1px solid #a0a0a0;
  font-size: 29px;
  padding-left: ${p => (p.$last ? 76 : 0)}px;
  display: flex;
  align-items: center;
  justify-content: center;
`;

const RowHead = styled.div<{ $active?: boolean }>`
  background: ${p => (p.$active ? '#d2d2d2' : '#e6e6e6')};
  color: ${p => (p.$active ? GREEN : '#111')};
  border-right: 1px solid #a6a6a6;
  border-bottom: 1px solid #a6a6a6;
  font-size: 29px;
  display: flex;
  align-items: center;
  justify-content: center;
`;

const Cell = styled.div<{
  $header?: boolean;
  $plain?: boolean;
  $num?: boolean;
  $last?: boolean;
  $align: string;
  $selected?: boolean;
}>`
  font-size: 29px;
  line-height: 47px;
  color: #000;
  padding: 0 5px;
  white-space: nowrap;
  text-align: ${p => p.$align};
  background: ${p => (p.$header ? '#ddebf7' : p.$num ? '#fce4d6' : '#fff')};
  border-right: 1px solid ${p => (p.$last ? '#999' : p.$plain ? '#d4d4d4' : '#000')};
  border-bottom: 1px solid ${p => (p.$header ? '#a0a0a0' : p.$plain ? '#d4d4d4' : '#000')};
  ${p =>
    p.$selected &&
    `position: relative;
    outline: 2px solid ${GREEN};
    outline-offset: -1px;
    z-index: 1;
    &::after {
      content: '';
      position: absolute;
      right: -4px;
      bottom: -4px;
      width: 6px;
      height: 6px;
      background: ${GREEN};
      border: 1px solid #fff;
    }`}
`;

const LatinRun = styled.span`
  font-size: 30px;
  letter-spacing: 0.25px;
`;

const VScroll = styled.div`
  flex: 1;
  display: flex;
  flex-direction: column;
  padding: 2px 3px 1px 3px;
`;

const ScrollBtn = styled.div<{ $dir: 'up' | 'down' }>`
  height: 18px;
  flex: none;
  background: #fff;
  border: 1px solid #787878;
  display: flex;
  align-items: center;
  justify-content: center;
  &::before {
    content: '';
    border-left: 5px solid transparent;
    border-right: 5px solid transparent;
    ${p => (p.$dir === 'up' ? 'border-bottom: 5px solid #777;' : 'border-top: 5px solid #777;')}
  }
`;

const VThumb = styled.div`
  height: 324px;
  flex: none;
  background: #fff;
  border: 1px solid #787878;
  border-top-width: 2px;
`;

const VTrack = styled.div`
  flex: 1;
  background: #d6d6d6;
`;

/* sheet tabs */
const SheetBar = styled.div`
  height: 28px;
  flex: none;
  background: #e6e6e6;
  border-top: 1px solid #a0a0a0;
  border-bottom: 1px solid #d0d0d0;
  display: flex;
  align-items: flex-start;
`;

const TabNav = styled.div`
  width: 100px;
  flex: none;
  display: flex;
  gap: 22px;
  padding: 9px 0 0 27px;
`;

const NavArrow = styled.span<{ $dir: 'left' | 'right' }>`
  width: 0;
  height: 0;
  border-top: 5px solid transparent;
  border-bottom: 5px solid transparent;
  ${p => (p.$dir === 'left' ? 'border-right: 5px solid #c4c4c4;' : 'border-left: 5px solid #c4c4c4;')}
`;

const SheetTab = styled.div<{ $active?: boolean }>`
  width: ${p => (p.$active ? 74 : 77)}px;
  height: ${p => (p.$active ? 25 : 24)}px;
  flex: none;
  font-size: 18px;
  display: flex;
  align-items: center;
  justify-content: center;
  margin-top: -1px;
  color: ${p => (p.$active ? GREEN : '#444')};
  background: ${p => (p.$active ? '#fff' : 'transparent')};
  border-left: ${p => (p.$active ? '1px solid #a0a0a0' : 'none')};
  border-right: 1px solid #a0a0a0;
  border-bottom: ${p => (p.$active ? `3px solid ${GREEN}` : 'none')};
`;

const AddSheet = styled.div`
  width: 20px;
  height: 20px;
  flex: none;
  margin: 4px 829px 0 32px;
  border-radius: 50%;
  border: 1px solid #777;
  color: #666;
  font-size: 19px;
  line-height: 17px;
  text-align: center;
`;

const HScroll = styled.div`
  width: 725px;
  height: 20px;
  flex: none;
  margin: 4px 0 0 -2px;
  display: flex;
`;

const HBtn = styled.div<{ $dir: 'left' | 'right' }>`
  width: 19px;
  flex: none;
  background: #fff;
  border: 1px solid #787878;
  display: flex;
  align-items: center;
  justify-content: center;
  &::before {
    content: '';
    border-top: 5px solid transparent;
    border-bottom: 5px solid transparent;
    ${p => (p.$dir === 'left' ? 'border-right: 5px solid #777;' : 'border-left: 5px solid #777;')}
  }
`;

const HThumb = styled.div`
  width: 480px;
  flex: none;
  background: #fff;
  border: 1px solid #787878;
  border-left: none;
`;

const HTrack = styled.div`
  flex: 1;
  background: #d6d6d6;
`;

/* status bar */
const StatusBar = styled.div`
  height: 25px;
  flex: none;
  background: #f3f2f1;
  display: flex;
  align-items: center;
  padding-left: 9px;
  font-size: 14.5px;
  color: #444;
`;

const StatusText = styled.span`
  width: 61px;
  font-size: 15px;
  white-space: nowrap;
`;

const StatusAccess = styled.span`
  margin-left: 23px;
  display: flex;
  align-items: center;
  gap: 4px;
  white-space: nowrap;
  letter-spacing: -0.7px;
`;

const ViewBtn = styled.div<{ $active?: boolean; $ml?: string }>`
  width: 50px;
  height: 25px;
  flex: none;
  margin-left: ${p => p.$ml ?? '0'};
  background: ${p => (p.$active ? '#d0cfcd' : 'transparent')};
  display: flex;
  align-items: center;
  justify-content: center;
`;

const ZoomMark = styled.span<{ $ml: number }>`
  margin-left: ${p => p.$ml}px;
  width: 10px;
  flex: none;
  font-size: 18px;
  color: #555;
  text-align: center;
  font-family: "Liberation Sans", sans-serif;
`;

const ZoomSlider = styled.div`
  width: 125px;
  height: 1px;
  flex: none;
  margin-left: 6px;
  background: #555;
  position: relative;
`;

const ZoomTick = styled.span`
  position: absolute;
  left: 63px;
  top: -5px;
  width: 1px;
  height: 11px;
  background: #555;
`;

const ZoomThumb = styled.span`
  position: absolute;
  left: 72px;
  top: -11px;
  width: 6px;
  height: 22px;
  background: #666;
`;

const ZoomValue = styled.span`
  margin: 0 10px 0 16px;
  width: 42px;
  flex: none;
  font-size: 16px;
  color: #555;
  white-space: nowrap;
  font-family: "Liberation Sans", sans-serif;
`;

const TaskStrip = styled.div`
  height: 3px;
  flex: none;
  display: flex;
`;

const StripPart = styled.div<{ $w: number; $c: string }>`
  width: ${p => p.$w}px;
  flex: none;
  background: ${p => p.$c};
`;

export default App;
